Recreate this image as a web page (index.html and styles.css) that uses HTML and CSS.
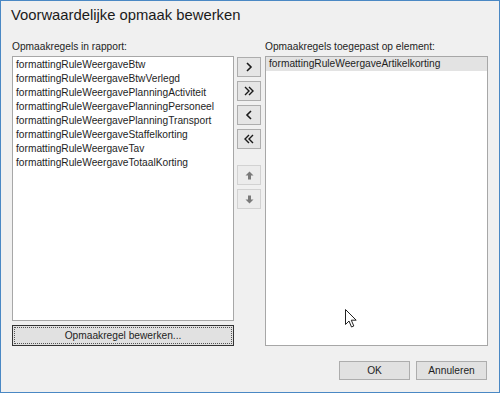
FILE: index.html
```html
<!DOCTYPE html>
<html>
<head>
<meta charset="utf-8">
<link rel="stylesheet" href="styles.css">
</head>
<body>
<div class="window">
  <div class="title">Voorwaardelijke opmaak bewerken</div>
  <div class="main">
    <div class="col left">
      <div class="label">Opmaakregels in rapport:</div>
      <div class="list list-left">
        <div class="item">formattingRuleWeergaveBtw</div>
        <div class="item">formattingRuleWeergaveBtwVerlegd</div>
        <div class="item">formattingRuleWeergavePlanningActiviteit</div>
        <div class="item">formattingRuleWeergavePlanningPersoneel</div>
        <div class="item">formattingRuleWeergavePlanningTransport</div>
        <div class="item">formattingRuleWeergaveStaffelkorting</div>
        <div class="item">formattingRuleWeergaveTav</div>
        <div class="item">formattingRuleWeergaveTotaalKorting</div>
      </div>
      <div class="btn edit"><span class="focus">Opmaakregel bewerken...</span></div>
    </div>
    <div class="mid">
      <div class="btn move"><svg width="8" height="10" viewBox="0 0 8 10"><path d="M2 1 L6 5 L2 9" fill="none" stroke="#1a1a1a" stroke-width="1.6"/></svg></div>
      <div class="btn move"><svg width="10" height="10" viewBox="0 0 10 10"><path d="M1 1 L5 5 L1 9 M5 1 L9 5 L5 9" fill="none" stroke="#1a1a1a" stroke-width="1.4"/></svg></div>
      <div class="btn move"><svg width="8" height="10" viewBox="0 0 8 10"><path d="M6 1 L2 5 L6 9" fill="none" stroke="#1a1a1a" stroke-width="1.6"/></svg></div>
      <div class="btn move"><svg width="10" height="10" viewBox="0 0 10 10"><path d="M9 1 L5 5 L9 9 M5 1 L1 5 L5 9" fill="none" stroke="#1a1a1a" stroke-width="1.4"/></svg></div>
      <div class="btn move disabled gap"><svg width="9" height="9" viewBox="0 0 9 9"><path d="M4.5 0.5 L8.5 4.5 L6 4.5 L6 8.5 L3 8.5 L3 4.5 L0.5 4.5 Z" fill="#7a7a7a"/></svg></div>
      <div class="btn move disabled"><svg width="9" height="9" viewBox="0 0 9 9"><path d="M4.5 8.5 L8.5 4.5 L6 4.5 L6 0.5 L3 0.5 L3 4.5 L0.5 4.5 Z" fill="#7a7a7a"/></svg></div>
    </div>
    <div class="col right">
      <div class="label">Opmaakregels toegepast op element:</div>
      <div class="list list-right">
        <div class="item selected">formattingRuleWeergaveArtikelkorting</div>
      </div>
    </div>
  </div>
  <div class="footer">
    <div class="btn dlg">OK</div>
    <div class="btn dlg">Annuleren</div>
  </div>
  <svg class="cursor" width="14" height="20" viewBox="0 0 14 20"><path d="M0.5 0.5 L0.5 15.5 L4 12 L6.5 18 L8.8 17 L6.3 11.2 L11.2 11.2 Z" fill="#ffffff" stroke="#222" stroke-width="1"/></svg>
</div>
</body>
</html>
```

FILE: styles.css
```css
html, body {
  margin: 0;
  padding: 0;
}
body {
  font-family: "Liberation Sans", Arial, sans-serif;
  color: #1e1e1e;
}
.window {
  width: 500px;
  height: 393px;
  box-sizing: border-box;
  border: 1px solid #4a88c4;
  background: #f0f0f0;
  position: relative;
  overflow: hidden;
}
.title {
  height: 38px;
  box-sizing: border-box;
  padding: 4px 0 0 10px;
  font-size: 14.8px;
  line-height: 20px;
  color: #1a1a1a;
}
.main {
  display: flex;
  padding: 0 11px;
}
.col {
  display: flex;
  flex-direction: column;
}
.left {
  width: 222px;
}
.right {
  width: 223px;
  margin-left: 4px;
}
.label {
  font-size: 10.2px;
  line-height: 15px;
  height: 17px;
  color: #1e1e1e;
}
.list {
  background: #ffffff;
  border: 1px solid #a7a7a7;
  box-sizing: border-box;
  padding: 1px 0 0 0;
}
.list-left {
  height: 265px;
  padding: 1px 3px;
}
.list-right {
  height: 290px;
  padding: 0;
}
.item {
  font-size: 10.2px;
  line-height: 14px;
  height: 14px;
  white-space: nowrap;
  color: #1e1e1e;
}
.item.selected {
  background: #e3e3e3;
  padding-left: 3px;
}
.btn {
  box-sizing: border-box;
  border: 1px solid #adadad;
  background: #e1e1e1;
  display: flex;
  align-items: center;
  justify-content: center;
  font-size: 10.2px;
  color: #1e1e1e;
}
.edit {
  margin-top: 4px;
  height: 21px;
  border-color: #333333;
  padding: 1px;
}
.edit .focus {
  flex: 1;
  align-self: stretch;
  display: flex;
  align-items: center;
  justify-content: center;
  border: 1px dotted #555555;
}
.mid {
  margin-left: 3px;
  padding-top: 18px;
  display: flex;
  flex-direction: column;
  gap: 4px;
  width: 24px;
}
.move {
  width: 24px;
  height: 20px;
  background: #e5e5e5;
}
.move.disabled {
  background: #ececec;
  border-color: #d2d2d2;
}
.move.gap {
  margin-top: 12px;
}
.footer {
  display: flex;
  justify-content: flex-end;
  gap: 6px;
  padding: 15px 12px 0 0;
}
.dlg {
  width: 71px;
  height: 19px;
}
.cursor {
  position: absolute;
  left: 344px;
  top: 308px;
}
```
